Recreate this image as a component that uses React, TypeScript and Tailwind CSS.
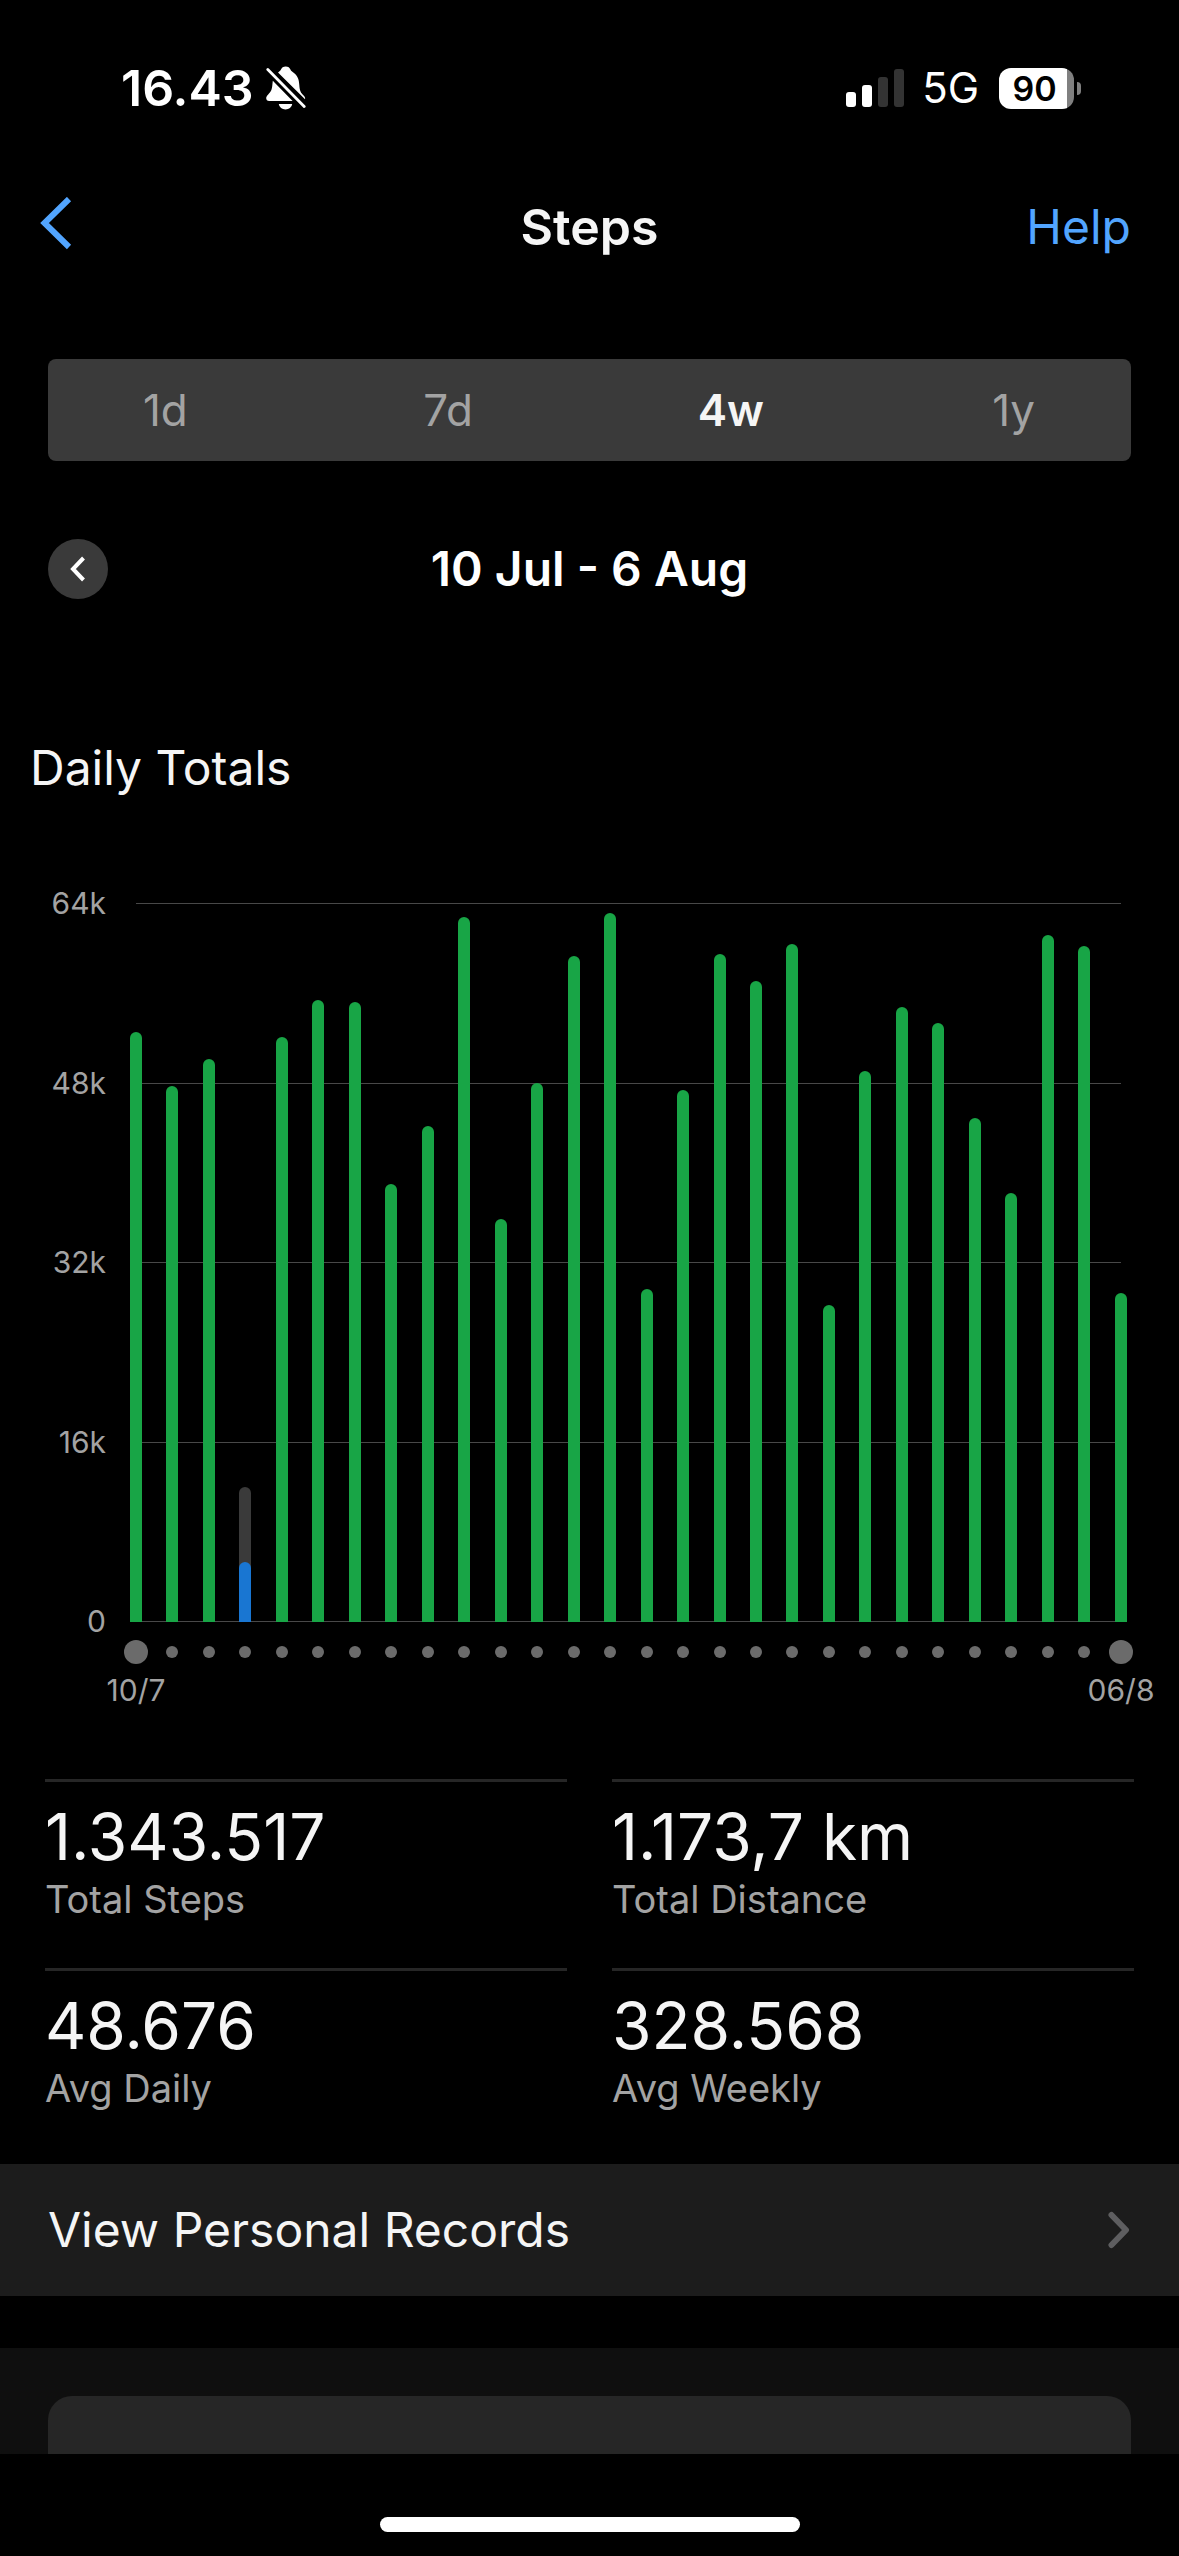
/**
 * Steps Screen
 *
 * Shows four weeks of daily step totals with a bar chart and summary stats
 */

import { useState } from 'react';

interface Day {
  steps: number;
  goal?: number;
}

interface Stat {
  value: string;
  label: string;
}

const MAX_STEPS = 64000;

const ranges = ['1d', '7d', '4w', '1y'];

const axisLabels = ['64k', '48k', '32k', '16k', '0'];

// Days below their goal also carry the goal, drawn as a gray track
const days: Day[] = [
  { steps: 52590 },
  { steps: 47780 },
  { steps: 50180 },
  { steps: 5350, goal: 12030 },
  { steps: 52140 },
  { steps: 55440 },
  { steps: 55260 },
  { steps: 39040 },
  { steps: 44210 },
  { steps: 62840 },
  { steps: 35920 },
  { steps: 48040 },
  { steps: 59360 },
  { steps: 63200 },
  { steps: 29680 },
  { steps: 47420 },
  { steps: 59540 },
  { steps: 57140 },
  { steps: 60430 },
  { steps: 28260 },
  { steps: 49110 },
  { steps: 54820 },
  { steps: 53390 },
  { steps: 44920 },
  { steps: 38240 },
  { steps: 61240 },
  { steps: 60250 },
  { steps: 29320 },
];

const stats: Stat[] = [
  { value: '1.343.517', label: 'Total Steps' },
  { value: '1.173,7 km', label: 'Total Distance' },
  { value: '48.676', label: 'Avg Daily' },
  { value: '328.568', label: 'Avg Weekly' },
];

const percent = (steps: number) => `${(steps / MAX_STEPS) * 100}%`;

function StatusBar() {
  return (
    <div className="flex h-[176px] items-center justify-between pl-[121px] pr-[98px]">
      <div className="flex items-center gap-3">
        <span className="text-[50px] leading-[60px] font-semibold text-white">16.43</span>
        <svg width="40" height="44" viewBox="0 0 40 44" fill="none" aria-hidden="true">
          <path
            d="M12 6.5C13.5 5.3 14.3 5 14.8 3.8C15.6 1.6 17.3 .4 19.7 .4C22.1 .4 23.8 1.6 24.6 3.8C25 5 25.6 5.3 27 6.2C31.6 9.2 33 13.4 33.3 19C33.6 25 35 27 37.6 29.4C39 30.8 39.4 31.8 39 33.2L12 6.5Z"
            fill="white"
          />
          <path
            d="M6.8 14.8L26.6 35H3.2C1.2 35 .2 33.8 .2 32.2C.2 30.8 .9 30 2 28.8C5 25.8 6 23.8 6.4 18.6L6.8 14.8Z"
            fill="white"
          />
          <path d="M12.8 38H26.2C25.6 41.2 23 43.4 19.5 43.4C16 43.4 13.4 41.2 12.8 38Z" fill="white" />
          <path d="M1.8 3.6L38.2 40.4" stroke="white" strokeWidth="2.8" strokeLinecap="round" />
        </svg>
      </div>
      <div className="flex items-center">
        <svg width="58" height="38" viewBox="0 0 58 38" aria-hidden="true">
          <rect x="0" y="23" width="10" height="15" rx="3" fill="white" />
          <rect x="16" y="16" width="10" height="22" rx="3" fill="white" />
          <rect x="32" y="8" width="10" height="30" rx="3" fill="#333333" />
          <rect x="48" y="0" width="10" height="38" rx="3" fill="#333333" />
        </svg>
        <span className="ml-[18px] text-[42px] leading-[60px] text-white">5G</span>
        <div className="ml-5 flex items-center gap-[3px]">
          <div className="flex h-[41px] w-[75px] items-center justify-center rounded-[12px] bg-[linear-gradient(90deg,#ffffff_68px,#808080_68px)]">
            <span className="pr-1 text-[34px] leading-[41px] font-semibold text-black">90</span>
          </div>
          <div className="h-[13px] w-1 rounded-r-full bg-[#808080]" />
        </div>
      </div>
    </div>
  );
}

function Header() {
  return (
    <header className="grid h-[102px] grid-cols-3 items-center px-12">
      <button type="button" aria-label="Back" className="-ml-2 justify-self-start">
        <svg width="32" height="60" viewBox="0 0 32 60" fill="none" aria-hidden="true">
          <path d="M29 2L4.500 26L29 50" stroke="#52a5ff" strokeWidth="6" />
        </svg>
      </button>
      <h1 className="text-center text-[50px] leading-[60px] font-semibold text-[#f5f5f5]">Steps</h1>
      <a href="#help" className="justify-self-end text-[48px] leading-[60px] text-[#52a5ff]">
        Help
      </a>
    </header>
  );
}

function RangeTabs() {
  const [active, setActive] = useState('4w');

  return (
    <div className="mx-12 mt-[81px] rounded-lg bg-[#3a3a3a]">
      <div className="-mx-6 grid grid-cols-4">
        {ranges.map((range) => (
          <button
            key={range}
            type="button"
            aria-pressed={range === active}
            onClick={() => setActive(range)}
            className={`h-[102px] text-[44px] ${
              range === active ? 'font-semibold text-[#f5f5f5]' : 'text-[#a3a3a3]'
            }`}
          >
            {range}
          </button>
        ))}
      </div>
    </div>
  );
}

function DateNav() {
  return (
    <div className="mx-12 mt-[78px] flex items-center justify-between">
      <button
        type="button"
        aria-label="Previous 4 weeks"
        className="flex size-[60px] items-center justify-center rounded-full bg-[#3a3a3a]"
      >
        <svg width="16" height="26" viewBox="0 0 16 26" fill="none" aria-hidden="true">
          <path d="M13.500 2L3 13L13.500 24" stroke="white" strokeWidth="4" />
        </svg>
      </button>
      <p className="text-[48px] leading-[60px] font-semibold text-white">10 Jul - 6 Aug</p>
      <div className="size-[60px]" />
    </div>
  );
}

function Bar({ day }: { day: Day }) {
  if (day.goal) {
    return (
      <div
        className="flex w-3 items-end overflow-hidden rounded-t-full bg-[#3a3a3a]"
        style={{ height: percent(day.goal) }}
      >
        <div
          className="w-3 rounded-t-full bg-[#1976d2]"
          style={{ height: `${(day.steps / day.goal) * 100}%` }}
        />
      </div>
    );
  }

  return <div className="w-3 rounded-t-full bg-[#18a546]" style={{ height: percent(day.steps) }} />;
}

function StepsChart() {
  return (
    <div className="mt-[105px] flex pr-[52px]">
      <div className="flex h-[719px] w-[106px] flex-col justify-between text-right text-[30px] text-[#a3a3a3]">
        {axisLabels.map((label) => (
          <span key={label} className="flex h-px items-center justify-end">
            {label}
          </span>
        ))}
      </div>
      <div className="ml-6 flex-1">
        <div className="relative h-[719px]">
          <div className="absolute inset-x-[6px] inset-y-0 flex flex-col justify-between">
            {axisLabels.map((label) => (
              <div key={label} className="h-px bg-[#484848]" />
            ))}
          </div>
          <div className="relative flex h-full items-end justify-between pt-px">
            {days.map((day, index) => (
              <Bar key={index} day={day} />
            ))}
          </div>
        </div>
        <div className="mt-[18px] flex h-6 items-center justify-between">
          {days.map((_, index) => (
            <div key={index} className="flex w-3 justify-center">
              <div
                className={`shrink-0 rounded-full bg-[#6b6b6b] ${
                  index === 0 || index === days.length - 1 ? 'size-6' : 'size-3'
                }`}
              />
            </div>
          ))}
        </div>
        <div className="mt-2 flex justify-between text-[30px] leading-[36px] text-[#a3a3a3]">
          <span className="flex w-3 justify-center">10/7</span>
          <span className="flex w-3 justify-center">06/8</span>
        </div>
      </div>
    </div>
  );
}

function StatGrid() {
  return (
    <dl className="mx-[45px] mt-[71px] grid grid-cols-2 gap-x-[45px]">
      {stats.map((stat) => (
        <div key={stat.label} className="flex h-[189px] flex-col border-t-[3px] border-[#262626] pt-4">
          <dt className="order-2 text-[38px] leading-[46px] text-[#a3a3a3]">{stat.label}</dt>
          <dd className="text-[64px] leading-[78px] text-[#f5f5f5]">{stat.value}</dd>
        </div>
      ))}
    </dl>
  );
}

export default function App() {
  return (
    <div className="flex min-h-screen flex-col overflow-hidden bg-black font-['Inter',sans-serif]">
      <StatusBar />
      <Header />
      <main className="flex flex-1 flex-col">
        <RangeTabs />
        <DateNav />
        <h2 className="mt-[139px] pl-[30px] text-[48px] leading-[60px] text-[#f5f5f5]">Daily Totals</h2>
        <StepsChart />
        <StatGrid />
        <a
          href="#records"
          className="mt-[7px] flex h-[132px] items-center justify-between bg-[#1c1c1c] px-12"
        >
          <span className="text-[48px] leading-[60px] text-[#f5f5f5]">View Personal Records</span>
          <svg width="24" height="38" viewBox="0 0 24 38" fill="none" aria-hidden="true">
            <path
              d="M4.500 4L19 19L4.500 34"
              stroke="#5e5e60"
              strokeWidth="6"
              strokeLinecap="round"
              strokeLinejoin="round"
            />
          </svg>
        </a>
        <div className="mt-[52px] h-[106px] bg-[#0f0f0f] px-12 pt-12">
          <div className="h-full rounded-t-3xl bg-[#262626]" />
        </div>
      </main>
      <div className="flex h-[102px] justify-center pt-[63px]">
        <div className="h-[15px] w-[420px] rounded-full bg-white" />
      </div>
    </div>
  );
}
